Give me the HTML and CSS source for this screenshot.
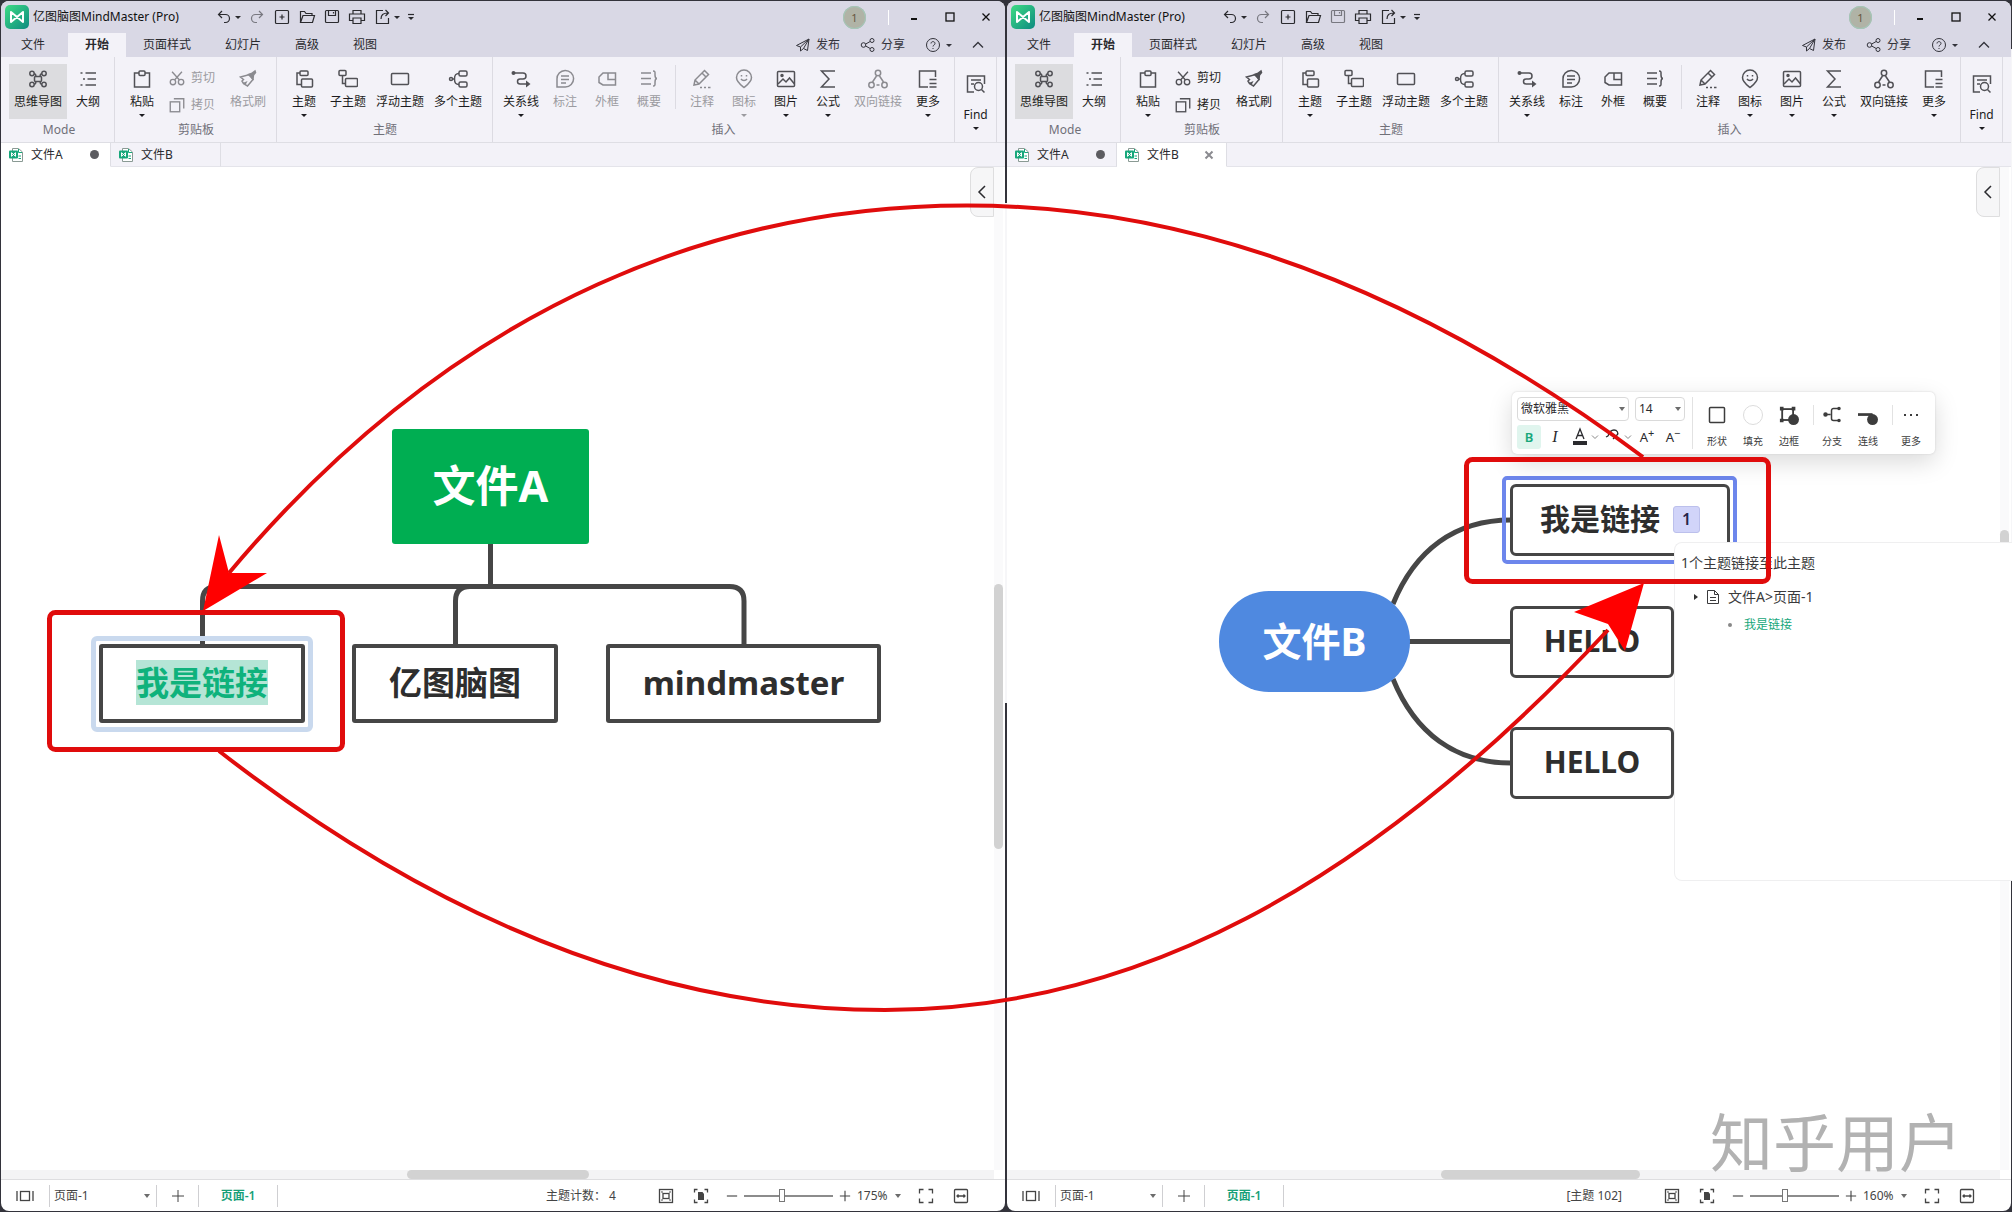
FILE: index.html
```html
<!DOCTYPE html>
<html lang="zh-CN">
<head>
<meta charset="utf-8">
<title>亿图脑图MindMaster (Pro)</title>
<link rel="stylesheet" href="styles.css">
</head>
<body>
<svg class="sprite" aria-hidden="true">
  <defs>
    <linearGradient id="brand" x1="0" y1="0" x2="1" y2="1"><stop offset="0" stop-color="#3fdc84"/><stop offset="1" stop-color="#0d8a80"/></linearGradient>
  </defs>
  <symbol id="logo" viewBox="0 0 24 24"><rect width="24" height="24" rx="5" fill="url(#brand)"/><path d="M6 7v10l12-10v10z" fill="none" stroke="#fff" stroke-width="2" stroke-linejoin="round"/></symbol>
  <symbol id="undo" viewBox="0 0 20 20"><path d="M8 4 4.500 7.500 8 11M5 7.500h6.500a3.800 3.800 0 0 1 0 8H10"/></symbol>
  <symbol id="redo" viewBox="0 0 20 20"><path d="m12 4 3.500 3.500L12 11M15 7.500H8.500a3.800 3.800 0 0 0 0 8H10"/></symbol>
  <symbol id="new" viewBox="0 0 20 20"><rect x="3.500" y="3.500" width="13" height="13" rx="1"/><path d="M10 7.500v5M7.500 10h5"/></symbol>
  <symbol id="open" viewBox="0 0 20 20"><path d="M3.500 15.500v-11h4l1.500 2h6v2M3.500 15.500l2.500-7h11.500l-2 7z"/></symbol>
  <symbol id="save" viewBox="0 0 20 20"><rect x="3.500" y="3.500" width="13" height="12" rx="1"/><path d="M6.500 3.500v5h7v-5M11.500 5v1.500"/></symbol>
  <symbol id="print" viewBox="0 0 20 20"><path d="M6 7V3.500h8V7M6 13.500H2.500V7h15v6.500H14M6 11h8v5.500H6z"/></symbol>
  <symbol id="export" viewBox="0 0 20 20"><path d="M10 3.500H3.500v13h12V11M8 12c0-4 2-6 7-6M12.500 3l3 3-3 3"/></symbol>
  <symbol id="more-v" viewBox="0 0 10 10"><path d="M2 2.500h6"/><path d="M2 5h6L5 8z" fill="currentColor" stroke="none"/></symbol>
  <symbol id="min" viewBox="0 0 12 12"><path d="M3 8h6" stroke-width="2"/></symbol>
  <symbol id="max" viewBox="0 0 12 12"><rect x="2" y="2" width="8" height="8"/></symbol>
  <symbol id="close" viewBox="0 0 12 12"><path d="m2.500 2.500 7 7M9.500 2.500l-7 7"/></symbol>
  <symbol id="plane" viewBox="0 0 16 16"><path d="M1.500 8.500 14 2l-1.500 11.500-4-2L14 2 5.500 10zM5.500 10v4l3-2.500"/></symbol>
  <symbol id="share" viewBox="0 0 16 16"><circle cx="3.500" cy="8" r="2.300"/><circle cx="12" cy="3.500" r="2"/><circle cx="12" cy="12.500" r="2"/><path d="m5.700 7 4.500-2.500M5.700 9l4.500 2.500"/></symbol>
  <symbol id="help" viewBox="0 0 16 16"><circle cx="8" cy="8" r="6.500"/><path d="M6 6.500c0-2.500 4-2.500 4 0 0 1.500-2 1.500-2 3M8 11v1"/></symbol>
  <symbol id="up" viewBox="0 0 12 12"><path d="m1 8.500 5-5 5 5"/></symbol>
  <symbol id="left" viewBox="0 0 12 16"><path d="M9 2 3 8l6 6"/></symbol>
  <symbol id="down" viewBox="0 0 8 8"><path d="m1 2.500 3 3 3-3"/></symbol>
  <symbol id="mind" viewBox="0 0 20 20"><rect x="6.500" y="7.500" width="7" height="5" rx="1"/><circle cx="4" cy="4.500" r="2.200"/><circle cx="16" cy="4.500" r="2.200"/><circle cx="4" cy="15.500" r="2.200"/><circle cx="16" cy="15.500" r="2.200"/><path d="M6.200 4.500C7.500 5 8 6 8 7.500M13.800 4.500C12.500 5 12 6 12 7.500M6.200 15.500c1.300-.5 1.800-1.500 1.800-3M13.800 15.500c-1.300-.5-1.800-1.500-1.800-3"/></symbol>
  <symbol id="outline" viewBox="0 0 20 20"><path d="M2.500 4h2M7.500 4H18M5 10h2M9.500 10H18M2.500 16h2M7.500 16H18"/></symbol>
  <symbol id="paste" viewBox="0 0 20 20"><path d="M7 4H2.500v14h15V4H13"/><rect x="7" y="2" width="6" height="4.500" rx="1"/></symbol>
  <symbol id="cut" viewBox="0 0 20 20"><circle cx="5.500" cy="14.500" r="3"/><circle cx="14.500" cy="14.500" r="3"/><path d="M4.500 3 12.500 12M15.500 3 7.500 12"/></symbol>
  <symbol id="copy" viewBox="0 0 20 20"><rect x="2.500" y="6.500" width="10.500" height="11"/><path d="M6.500 3h11v11"/></symbol>
  <symbol id="brush" viewBox="0 0 20 20"><path d="m2.500 8 9-2.500 3.500 5L9.500 17l-2.500-1.500 1-2-2.500 1L4 12l1.500-1.500z"/><path d="m10.500 5.500 3-1L17 2l.5 1.500L15.500 6l-.5 4z" fill="currentColor"/></symbol>
  <symbol id="topic" viewBox="0 0 20 20"><path d="M6 4H3v11.500h4.500"/><rect x="6" y="2" width="8" height="4.500" rx="1"/><rect x="7.500" y="10" width="11" height="8" rx="1"/></symbol>
  <symbol id="subtopic" viewBox="0 0 20 20"><rect x="1" y="1.500" width="7" height="5" rx="1"/><path d="M4.500 6.500v8H7"/><rect x="7.500" y="9.500" width="12" height="8" rx="1"/></symbol>
  <symbol id="float" viewBox="0 0 20 20"><rect x="1.500" y="4.500" width="17" height="11" rx="1"/></symbol>
  <symbol id="multi" viewBox="0 0 20 20"><rect x="11" y="2" width="8" height="5" rx="1.500"/><rect x="11" y="13" width="8" height="5" rx="1.500"/><circle cx="3" cy="10" r="1.500"/><path d="M4.500 10h2c0-4 1-5.500 4.500-5.500M6.500 10c0 4 1 5.500 4.500 5.500"/></symbol>
  <symbol id="relation" viewBox="0 0 20 20"><circle cx="2.500" cy="4" r="2" fill="currentColor" stroke="none"/><path d="M3 4h9a3 3 0 0 1 0 6H9a2.500 2.500 0 0 0 0 5h8"/><path d="M15 11.500v7l4.500-3.500z" fill="currentColor" stroke="none"/></symbol>
  <symbol id="callout" viewBox="0 0 20 20"><path d="M2 18v-8a8.300 8.300 0 1 1 8.300 8zM6 7h8M6 10.500h8M6 14h5"/></symbol>
  <symbol id="boundary" viewBox="0 0 20 20"><path d="M6 4h12.500v12H6L2 13.500V8zM11 4v6.500h7.500"/></symbol>
  <symbol id="summary" viewBox="0 0 20 20"><path d="M2 4h10M2 9.500h10M2 15h10M14 2c2.500 0 2 1.500 2 4 0 2 .5 3.500 2 3.500-1.500 0-2 1.500-2 3.500 0 2.500.5 4-2 4"/></symbol>
  <symbol id="note" viewBox="0 0 20 20"><path d="m2 16 1-5L12.500 1.500l4 4L7 15zM10 4l4 4M3 11l4 4"/><path d="M8 18.500h2M12 18.500h2M16 18.500h2.500"/></symbol>
  <symbol id="mark" viewBox="0 0 20 20"><path d="M10 18.500c-3-2.500-7.500-5.500-7.500-10a7.500 7.500 0 0 1 15 0c0 4.500-4.500 7.500-7.500 10z"/><path d="M7.500 6v1.500M12.500 6v1.500M7 10c1.500 2 4.500 2 6 0"/></symbol>
  <symbol id="picture" viewBox="0 0 20 20"><rect x="1.500" y="2.500" width="17" height="15" rx="1"/><path d="m2 15 5-5 3 3 3.500-4 5 6"/><circle cx="6" cy="6.500" r="1" fill="currentColor"/></symbol>
  <symbol id="formula" viewBox="0 0 20 20"><path d="M17 2H3.500l7.500 8-7.500 8H17"/></symbol>
  <symbol id="bilink" viewBox="0 0 20 20"><circle cx="10" cy="4" r="2.700"/><circle cx="3.500" cy="16" r="2.700"/><circle cx="16.500" cy="16" r="2.700"/><path d="m8.500 7-4 6M11.500 7l4 6M8.500 16h3"/></symbol>
  <symbol id="more" viewBox="0 0 20 20"><path d="M10 18H1.500V2h16v6M11.500 10.500h7M11.500 14.500h7M11.500 18h7"/></symbol>
  <symbol id="find" viewBox="0 0 20 20"><path d="M8 18H1.500V2h17v8M5 6h10M5 10h3"/><circle cx="12.500" cy="12.500" r="4"/><path d="m15.500 15.500 3 3"/></symbol>
  <symbol id="doc" viewBox="0 0 14 14"><path d="M3.500 13.500V.5h6L13.500 4v9.500z" fill="#fff" stroke="#8a9a94"/><path d="M9.500 8h2.500M9.500 10.500h2.500M9.500 1v3.500H13" fill="none" stroke="#17a77b"/><rect y="2.500" width="9" height="8" rx="1" fill="#17a77b"/><path d="M2.500 4.700v3.600l4-3.600v3.600z" fill="none" stroke="#fff"/></symbol>
  <symbol id="panes" viewBox="0 0 20 20"><path d="M2 5v10M18 5v10"/><rect x="5.500" y="5.500" width="9" height="9"/></symbol>
  <symbol id="plus" viewBox="0 0 14 14"><path d="M7 1v12M1 7h12"/></symbol>
  <symbol id="minus" viewBox="0 0 14 14"><path d="M1 7h12"/></symbol>
  <symbol id="fit" viewBox="0 0 20 20"><rect x="3.500" y="3.500" width="13" height="13"/><rect x="7" y="7.500" width="6" height="5"/><path d="m5.500 5.500 1 1M14.500 5.500l-1 1M5.500 14.500l1-1M14.500 14.500l-1-1"/></symbol>
  <symbol id="fitpage" viewBox="0 0 20 20"><path d="M3.500 6.500v-3h3M13.500 3.500h3v3M16.500 13.500v3h-3M6.500 16.500h-3v-3"/><path d="M7 6h4.500L13 8v6H7z" fill="currentColor" stroke="none"/></symbol>
  <symbol id="full" viewBox="0 0 20 20"><path d="M3.500 7.500v-4h4M12.500 3.500h4v4M16.500 12.500v4h-4M7.500 16.500h-4v-4"/></symbol>
  <symbol id="fitwidth" viewBox="0 0 20 20"><rect x="3.500" y="3.500" width="13" height="13" rx="1"/><path d="M6 10h8M7.500 8.500 6 10l1.500 1.500M12.500 8.500 14 10l-1.500 1.500"/></symbol>
  <symbol id="fontcolor" viewBox="0 0 18 20"><path d="m5 12 4-10 4 10M6.500 8.500h5"/><path d="M2 14h14v4H2z" fill="currentColor" stroke="none"/></symbol>
  <symbol id="marker" viewBox="0 0 18 20"><path d="M4 9c1-3 3-6 6-6s5 3 3 5l-4 4M4 9l-2 1"/></symbol>
  <symbol id="shape" viewBox="0 0 20 20"><rect x="2.500" y="2.500" width="15" height="15" rx="1"/></symbol>
  <symbol id="fill" viewBox="0 0 20 20"><circle cx="10" cy="10" r="9.500" stroke="#dcdcdc" stroke-width="1"/></symbol>
  <symbol id="border" viewBox="0 0 22 22"><rect x="3.500" y="4.500" width="12" height="12" stroke-width="2"/><path d="M1 2h4v4H1zM14 2h4v4h-4zM1 15h4v4H1z" fill="currentColor" stroke="none"/><circle cx="16" cy="16" r="6" fill="currentColor" stroke="none"/></symbol>
  <symbol id="branch" viewBox="0 0 20 20"><circle cx="3.500" cy="9.500" r="1.500" fill="currentColor"/><path d="M4 9.500h4.500M17 3.500h-5.500a2 2 0 0 0-2 2v8a2 2 0 0 0 2 2H17"/><circle cx="17" cy="3.500" r="1" fill="currentColor"/><circle cx="17" cy="15.500" r="1" fill="currentColor"/></symbol>
  <symbol id="line" viewBox="0 0 22 22"><path d="M0 10.500h16" stroke-width="3"/><circle cx="16" cy="16" r="6" fill="currentColor" stroke="none"/></symbol>
  <symbol id="dots" viewBox="0 0 20 20"><path d="M3 9h2v2H3zM9 9h2v2H9zM15 9h2v2h-2z" fill="currentColor" stroke="none"/></symbol>
  <symbol id="page" viewBox="0 0 14 16"><path d="M1.500 1.500h7l4 4v9h-11zM8.500 1.500v4h4M4 8.500h6M4 11.500h6"/></symbol>
</svg>

<main class="desktop">
  <section class="window">
    <header class="titlebar">
      <svg class="logo"><use href="#logo"/></svg>
      <h1>亿图脑图MindMaster (Pro)</h1>
      <div class="quick">
        <button class="wide" aria-label="撤销"><svg class="i20"><use href="#undo"/></svg><i class="caret"></i></button>
        <button class="off" aria-label="恢复"><svg class="i20"><use href="#redo"/></svg></button>
        <button aria-label="新建"><svg class="i20"><use href="#new"/></svg></button>
        <button aria-label="打开"><svg class="i20"><use href="#open"/></svg></button>
        <button aria-label="保存"><svg class="i20"><use href="#save"/></svg></button>
        <button aria-label="打印"><svg class="i20"><use href="#print"/></svg></button>
        <button class="wide" aria-label="导出"><svg class="i20"><use href="#export"/></svg><i class="caret"></i></button>
        <button class="narrow" aria-label="自定义"><svg class="i10"><use href="#more-v"/></svg></button>
      </div>
      <div class="controls">
        <span class="avatar">1</span><span class="bar"></span>
        <button aria-label="最小化"><svg class="i12"><use href="#min"/></svg></button>
        <button aria-label="最大化"><svg class="i12"><use href="#max"/></svg></button>
        <button aria-label="关闭"><svg class="i12"><use href="#close"/></svg></button>
      </div>
    </header>
    <nav class="menu">
      <button class="file">文件</button><button class="active">开始</button><button>页面样式</button><button>幻灯片</button><button>高级</button><button>视图</button>
      <div class="actions">
        <button><svg class="i16"><use href="#plane"/></svg>发布</button>
        <button><svg class="i16"><use href="#share"/></svg>分享</button>
        <button aria-label="帮助"><svg class="i16"><use href="#help"/></svg><i class="caret"></i></button>
        <button aria-label="收起"><svg class="i12"><use href="#up"/></svg></button>
      </div>
    </nav>
    <div class="ribbon">
      <div class="group mode"><div class="tools">
        <button class="tool on"><svg class="i20"><use href="#mind"/></svg>思维导图</button>
        <button class="tool"><svg class="i20"><use href="#outline"/></svg>大纲</button>
      </div><p>Mode</p></div>
      <div class="group"><div class="tools">
        <button class="tool"><svg class="i20"><use href="#paste"/></svg>粘贴<i class="caret"></i></button>
        <div class="clip">
          <button disabled><svg class="i18"><use href="#cut"/></svg>剪切</button>
          <button disabled><svg class="i18"><use href="#copy"/></svg>拷贝</button>
        </div>
        <button class="tool" disabled><svg class="i20"><use href="#brush"/></svg>格式刷</button>
      </div><p>剪贴板</p></div>
      <div class="group"><div class="tools">
        <button class="tool"><svg class="i20"><use href="#topic"/></svg>主题<i class="caret"></i></button>
        <button class="tool"><svg class="i20"><use href="#subtopic"/></svg>子主题</button>
        <button class="tool"><svg class="i20"><use href="#float"/></svg>浮动主题</button>
        <button class="tool"><svg class="i20"><use href="#multi"/></svg>多个主题</button>
      </div><p>主题</p></div>
      <div class="group insert"><div class="tools">
        <button class="tool"><svg class="i20"><use href="#relation"/></svg>关系线<i class="caret"></i></button>
        <button class="tool" disabled><svg class="i20"><use href="#callout"/></svg>标注</button>
        <button class="tool" disabled><svg class="i20"><use href="#boundary"/></svg>外框</button>
        <button class="tool" disabled><svg class="i20"><use href="#summary"/></svg>概要</button>
        <span class="split"></span>
        <button class="tool" disabled><svg class="i20"><use href="#note"/></svg>注释</button>
        <button class="tool" disabled><svg class="i20"><use href="#mark"/></svg>图标<i class="caret"></i></button>
        <button class="tool"><svg class="i20"><use href="#picture"/></svg>图片<i class="caret"></i></button>
        <button class="tool"><svg class="i20"><use href="#formula"/></svg>公式<i class="caret"></i></button>
        <button class="tool" disabled><svg class="i20"><use href="#bilink"/></svg>双向链接</button>
        <button class="tool"><svg class="i20"><use href="#more"/></svg>更多<i class="caret"></i></button>
      </div><p>插入</p></div>
      <div class="group find"><button class="tool"><svg class="i20"><use href="#find"/></svg>Find<i class="caret"></i></button></div>
    </div>
    <div class="docs">
      <button class="active"><svg class="i14"><use href="#doc"/></svg>文件A<i class="dot"></i></button>
      <button><svg class="i14"><use href="#doc"/></svg>文件B</button>
    </div>
    <div class="canvas">
      <svg class="links">
        <path d="M489.500 377v42.500M201.500 478v-44q0-14.500 14.500-14.500h512.500q14.500 0 14.500 14.500v44M454.500 478v-44q0-14.500 14.500-14.500"/>
      </svg>
      <div class="node root-a">文件A</div>
      <div class="select-a"></div>
      <div class="node square a1" id="link-a"><a href="#link-b">我是链接</a></div>
      <div class="node square a2">亿图脑图</div>
      <div class="node square a3">mindmaster</div>
      <button class="drawer" aria-label="展开面板"><svg class="i16"><use href="#left"/></svg></button>
      <div class="vtrack"><i class="vthumb"></i></div>
    </div>
    <div class="htrack"><i class="hthumb"></i></div>
    <footer class="status">
      <button class="view" aria-label="视图"><svg class="i20"><use href="#panes"/></svg></button>
      <label class="pick page"><select aria-label="页面"><option>页面-1</option></select></label>
      <button class="add" aria-label="新增页面"><svg class="i14"><use href="#plus"/></svg></button>
      <a class="sheet" href="#p1">页面-1</a>
      <div class="tail">
        <span class="count">主题计数： 4</span>
        <button aria-label="适合画布"><svg class="i20"><use href="#fit"/></svg></button>
        <button aria-label="适合页面"><svg class="i20"><use href="#fitpage"/></svg></button>
        <div class="zoom">
          <button aria-label="缩小"><svg class="i12"><use href="#minus"/></svg></button>
          <input type="range" min="0" max="100" value="42" aria-label="缩放">
          <button aria-label="放大"><svg class="i12"><use href="#plus"/></svg></button>
          <label class="pick percent"><select aria-label="缩放比例"><option>175%</option></select></label>
        </div>
        <button aria-label="全屏"><svg class="i20"><use href="#full"/></svg></button>
        <button aria-label="适合宽度"><svg class="i20"><use href="#fitwidth"/></svg></button>
      </div>
    </footer>
  </section>

  <section class="window second">
    <header class="titlebar">
      <svg class="logo"><use href="#logo"/></svg>
      <h1>亿图脑图MindMaster (Pro)</h1>
      <div class="quick">
        <button class="wide" aria-label="撤销"><svg class="i20"><use href="#undo"/></svg><i class="caret"></i></button>
        <button class="off" aria-label="恢复"><svg class="i20"><use href="#redo"/></svg></button>
        <button aria-label="新建"><svg class="i20"><use href="#new"/></svg></button>
        <button aria-label="打开"><svg class="i20"><use href="#open"/></svg></button>
        <button class="off" aria-label="保存"><svg class="i20"><use href="#save"/></svg></button>
        <button aria-label="打印"><svg class="i20"><use href="#print"/></svg></button>
        <button class="wide" aria-label="导出"><svg class="i20"><use href="#export"/></svg><i class="caret"></i></button>
        <button class="narrow" aria-label="自定义"><svg class="i10"><use href="#more-v"/></svg></button>
      </div>
      <div class="controls">
        <span class="avatar">1</span><span class="bar"></span>
        <button aria-label="最小化"><svg class="i12"><use href="#min"/></svg></button>
        <button aria-label="最大化"><svg class="i12"><use href="#max"/></svg></button>
        <button aria-label="关闭"><svg class="i12"><use href="#close"/></svg></button>
      </div>
    </header>
    <nav class="menu">
      <button class="file">文件</button><button class="active">开始</button><button>页面样式</button><button>幻灯片</button><button>高级</button><button>视图</button>
      <div class="actions">
        <button><svg class="i16"><use href="#plane"/></svg>发布</button>
        <button><svg class="i16"><use href="#share"/></svg>分享</button>
        <button aria-label="帮助"><svg class="i16"><use href="#help"/></svg><i class="caret"></i></button>
        <button aria-label="收起"><svg class="i12"><use href="#up"/></svg></button>
      </div>
    </nav>
    <div class="ribbon">
      <div class="group mode"><div class="tools">
        <button class="tool on"><svg class="i20"><use href="#mind"/></svg>思维导图</button>
        <button class="tool"><svg class="i20"><use href="#outline"/></svg>大纲</button>
      </div><p>Mode</p></div>
      <div class="group"><div class="tools">
        <button class="tool"><svg class="i20"><use href="#paste"/></svg>粘贴<i class="caret"></i></button>
        <div class="clip">
          <button><svg class="i18"><use href="#cut"/></svg>剪切</button>
          <button><svg class="i18"><use href="#copy"/></svg>拷贝</button>
        </div>
        <button class="tool"><svg class="i20"><use href="#brush"/></svg>格式刷</button>
      </div><p>剪贴板</p></div>
      <div class="group"><div class="tools">
        <button class="tool"><svg class="i20"><use href="#topic"/></svg>主题<i class="caret"></i></button>
        <button class="tool"><svg class="i20"><use href="#subtopic"/></svg>子主题</button>
        <button class="tool"><svg class="i20"><use href="#float"/></svg>浮动主题</button>
        <button class="tool"><svg class="i20"><use href="#multi"/></svg>多个主题</button>
      </div><p>主题</p></div>
      <div class="group insert"><div class="tools">
        <button class="tool"><svg class="i20"><use href="#relation"/></svg>关系线<i class="caret"></i></button>
        <button class="tool"><svg class="i20"><use href="#callout"/></svg>标注</button>
        <button class="tool"><svg class="i20"><use href="#boundary"/></svg>外框</button>
        <button class="tool"><svg class="i20"><use href="#summary"/></svg>概要</button>
        <span class="split"></span>
        <button class="tool"><svg class="i20"><use href="#note"/></svg>注释</button>
        <button class="tool"><svg class="i20"><use href="#mark"/></svg>图标<i class="caret"></i></button>
        <button class="tool"><svg class="i20"><use href="#picture"/></svg>图片<i class="caret"></i></button>
        <button class="tool"><svg class="i20"><use href="#formula"/></svg>公式<i class="caret"></i></button>
        <button class="tool"><svg class="i20"><use href="#bilink"/></svg>双向链接</button>
        <button class="tool"><svg class="i20"><use href="#more"/></svg>更多<i class="caret"></i></button>
      </div><p>插入</p></div>
      <div class="group find"><button class="tool"><svg class="i20"><use href="#find"/></svg>Find<i class="caret"></i></button></div>
    </div>
    <div class="docs">
      <button><svg class="i14"><use href="#doc"/></svg>文件A<i class="dot"></i></button>
      <button class="active"><svg class="i14"><use href="#doc"/></svg>文件B<svg class="i12 x"><use href="#close"/></svg></button>
    </div>
    <div class="canvas">
      <svg class="links">
        <path d="M402 474.500h102M386 437C408 383 448 353 504 353M386 512C408 566 448 596 504 596"/>
      </svg>
      <div class="node root-b">文件B</div>
      <div class="select-b"></div>
      <div class="node round b1" id="link-b">我是链接<span class="badge">1</span></div>
      <div class="node round b2">HELLO</div>
      <div class="node round b3">HELLO</div>
      <button class="drawer" aria-label="展开面板"><svg class="i16"><use href="#left"/></svg></button>
      <div class="vtrack"><i class="vthumb"></i></div>
      <div class="floatbar">
        <div class="format">
          <div class="row">
            <label class="pick face"><select aria-label="字体"><option>微软雅黑</option></select></label>
            <label class="pick size"><select aria-label="字号"><option>14</option></select></label>
          </div>
          <div class="row marks">
            <button class="bold">B</button><button class="italic">I</button>
            <button class="pair" aria-label="文字颜色"><svg class="ifmt"><use href="#fontcolor"/></svg><svg class="i8"><use href="#down"/></svg></button>
            <button class="pair" aria-label="高亮"><svg class="ifmt"><use href="#marker"/></svg><svg class="i8"><use href="#down"/></svg></button>
            <button>A<sup>+</sup></button><button>A<sup>−</sup></button>
          </div>
        </div>
        <span class="rule"></span>
        <button class="ft"><svg class="i20"><use href="#shape"/></svg>形状</button>
        <button class="ft"><svg class="i20"><use href="#fill"/></svg>填充</button>
        <button class="ft"><svg class="i20"><use href="#border"/></svg>边框</button>
        <span class="rule short"></span>
        <button class="ft"><svg class="i20"><use href="#branch"/></svg>分支</button>
        <button class="ft"><svg class="i20"><use href="#line"/></svg>连线</button>
        <span class="rule short"></span>
        <button class="ft"><svg class="i20"><use href="#dots"/></svg>更多</button>
      </div>
      <aside class="backlinks">
        <h2>1个主题链接至此主题</h2>
        <div class="source"><i class="tri"></i><svg class="ipage"><use href="#page"/></svg>文件A&gt;页面-1</div>
        <a href="#link-a"><i class="bullet"></i>我是链接</a>
      </aside>
      <div class="watermark">知乎用户</div>
    </div>
    <div class="htrack"><i class="hthumb"></i></div>
    <footer class="status">
      <button class="view" aria-label="视图"><svg class="i20"><use href="#panes"/></svg></button>
      <label class="pick page"><select aria-label="页面"><option>页面-1</option></select></label>
      <button class="add" aria-label="新增页面"><svg class="i14"><use href="#plus"/></svg></button>
      <a class="sheet" href="#p1">页面-1</a>
      <div class="tail">
        <span class="count">[主题 102]</span>
        <button aria-label="适合画布"><svg class="i20"><use href="#fit"/></svg></button>
        <button aria-label="适合页面"><svg class="i20"><use href="#fitpage"/></svg></button>
        <div class="zoom">
          <button aria-label="缩小"><svg class="i12"><use href="#minus"/></svg></button>
          <input type="range" min="0" max="100" value="38" aria-label="缩放">
          <button aria-label="放大"><svg class="i12"><use href="#plus"/></svg></button>
          <label class="pick percent"><select aria-label="缩放比例"><option>160%</option></select></label>
        </div>
        <button aria-label="全屏"><svg class="i20"><use href="#full"/></svg></button>
        <button aria-label="适合宽度"><svg class="i20"><use href="#fitwidth"/></svg></button>
      </div>
    </footer>
  </section>
</main>

<svg class="arrows" aria-hidden="true">
  <g fill="none" stroke="#e00c0c">
    <rect x="49.500" y="612.500" width="293" height="137" rx="6" stroke-width="5"/>
    <rect x="1466.500" y="459.500" width="302" height="122" rx="6" stroke-width="5"/>
    <path stroke-width="4" d="M229 573C464 293 732 205.500 967 205.500Q1305 205.500 1643 457"/>
    <path stroke-width="4" d="M219 751Q552 1010 885 1010C1130 1010 1363 892 1608 630"/>
  </g>
  <path fill="#f00" d="M203 611 219 535 229 573 267 573zM1644 583 1574 612 1608 624 1625 651z"/>
</svg>
</body>
</html>
```

FILE: styles.css
```css
* { box-sizing: border-box; }
html { background: #33333b; }
body {
  margin: 0;
  position: relative;
  color: #2a2a2e;
  font: 12px/16px "Noto Sans", "Noto Sans CJK SC", sans-serif;
}
button, select, input { font: inherit; color: inherit; margin: 0; padding: 0; border: 0; background: none; }
button { display: flex; align-items: center; justify-content: center; white-space: nowrap; }
a { color: inherit; text-decoration: none; }
h1, h2, p { margin: 0; font-size: 12px; font-weight: 400; }
svg { display: block; flex: none; fill: none; stroke: currentColor; stroke-width: 1.3; }
.sprite { position: absolute; width: 0; height: 0; }
.i8 { width: 8px; height: 8px; stroke-width: 1; color: #888; }
.i10 { width: 10px; height: 10px; }
.i12 { width: 12px; height: 12px; }
.i14 { width: 14px; height: 14px; stroke-width: 1; }
.i16 { width: 16px; height: 16px; stroke-width: 1; }
.i18 { width: 18px; height: 18px; stroke-width: 1.5; }
.i20 { width: 20px; height: 20px; }
.ifmt { width: 18px; height: 20px; }
.ipage { width: 14px; height: 16px; stroke-width: 1; }
.caret {
  flex: none;
  width: 0;
  border: 3px solid transparent;
  border-top: 3px solid currentColor;
  border-bottom: 0;
}

.desktop { display: grid; grid-template-columns: 1fr 1fr; gap: 2px; min-height: 100vh; padding: 1px; }
.window { position: relative; display: flex; flex-direction: column; min-width: 0; background: #fff; border-radius: 8px; }
.second::before, .second::after { content: ""; position: absolute; background: #f6f6f8; }
.second::before { left: -2px; width: 2px; top: 202px; height: 500px; }
.second::after { right: -1px; width: 1px; top: 48px; height: 832px; }

.titlebar { display: flex; align-items: center; height: 32px; padding-left: 4px; background: #d9d8e5; border-radius: 8px 8px 0 0; }
.titlebar h1 { width: 176px; padding-left: 4px; white-space: nowrap; color: #111; }
.logo { width: 24px; height: 24px; stroke: none; }
.quick { display: flex; align-items: center; gap: 5px; padding-left: 8px; }
.quick button { width: 20px; }
.quick .wide { width: 29px; gap: 1px; }
.quick .narrow { width: 10px; }
.quick svg { stroke-width: 1.2; }
.off { opacity: .55; }
.controls { display: flex; align-items: center; margin-left: auto; padding-right: 13px; }
.controls button { width: 12px; margin-left: 24px; color: #111; }
.controls .bar + button { margin-left: 19px; }
.avatar { width: 23px; height: 23px; line-height: 23px; border-radius: 50%; background: #b0b3a6; box-shadow: inset 0 0 0 1px #a4c6b8; text-align: center; font-size: 11px; color: #67553f; }
.bar { width: 1px; height: 15px; margin-left: 22px; background: #fff; }

.menu { display: flex; height: 24px; background: #d9d8e5; padding-left: 3px; }
.menu > button { padding: 0 17px; }
.menu .file { margin-right: 6px; }
.menu .active { background: #f3f2f8; font-weight: 700; }
.actions { display: flex; gap: 20px; margin-left: auto; padding-right: 21px; color: #33333b; }
.actions button { gap: 5px; }

.ribbon { display: flex; height: 86px; background: #f3f2f8; border-bottom: 1px solid #dedee4; color: #1c1c20; }
.group { padding: 7px 5px 0 6px; border-right: 1px solid #dcdbe2; }
.mode { padding-left: 8px; }
.insert { padding-left: 5px; }
.group p { line-height: 16px; margin-top: 3px; text-align: center; color: #707078; }
.tools { display: flex; }
.tool { flex-direction: column; justify-content: flex-start; gap: 4px; height: 55px; min-width: 42px; padding: 5px 5px 0; }
.tool svg { margin-bottom: 1px; }
.tool svg, .clip svg { color: #515156; stroke-width: 1.5; }
.on { background: #dcdcdf; }
button:disabled { color: #9b9ba0; }
button:disabled svg { color: #8b8b90; }
.clip { display: flex; flex-direction: column; gap: 9px; padding: 5px 10px 0 5px; }
.clip button { gap: 5px; height: 18px; }
.split { width: 1px; height: 44px; margin: 1px 5px 0; background: #dcdbe2; }
.find { padding: 5px 0 0; }
.find .tool { width: 41px; min-width: 0; height: 70px; padding-top: 12px; }
.find svg { margin-bottom: 9px; }

.docs { display: flex; height: 24px; background: #f3f2f8; }
.docs button { width: 110px; justify-content: flex-start; gap: 8px; padding: 0 11px 0 8px; border-right: 1px solid #dedee4; border-bottom: 1px solid #e4e4ea; }
.docs .active { background: #fff; border-bottom-color: #fff; }
.docs::after { content: ""; flex: 1; border-bottom: 1px solid #e4e4ea; }
.docs svg { stroke: none; }
.docs .x { margin-left: auto; stroke: #8b8b90; stroke-width: 2; }
.dot { width: 9px; height: 9px; margin-left: auto; border-radius: 50%; background: #5c5c60; }

.canvas { position: relative; flex: 1; min-height: 600px; }
.links { position: absolute; left: 0; top: 0; width: 100%; height: 100%; stroke: #464646; stroke-width: 5; }
.node { position: absolute; display: flex; align-items: center; justify-content: center; padding-bottom: 2px; font-weight: 700; white-space: nowrap; color: #2e2e2e; }
.root-a { left: 391px; top: 262px; width: 197px; height: 115px; border-radius: 3px; background: #00ae52; color: #fff; font-size: 43px; }
.square { top: 477px; width: 206px; height: 79px; border: 4px solid #464646; border-radius: 3px; background: #fff; font-size: 33px; }
.a1 { left: 98px; }
.a2 { left: 351px; }
.a3 { left: 605px; width: 275px; }
.a1 a { line-height: 45px; background: #b5e5d6; color: #0fb27c; }
.select-a { position: absolute; left: 90px; top: 469px; width: 222px; height: 96px; border: 5px solid #c9d9ee; border-radius: 6px; }
.root-b { left: 212px; top: 424px; width: 191px; height: 101px; border-radius: 50px; background: #4f89e0; color: #fff; font-size: 39px; }
.round { left: 503px; width: 164px; height: 72px; border: 3px solid #464646; border-radius: 6px; background: #fff; font-size: 30px; }
.b1 { top: 317px; width: 220px; gap: 13px; }
.b2 { top: 439px; }
.b3 { top: 560px; }
.select-b { position: absolute; left: 495px; top: 309px; width: 235px; height: 88px; border: 4px solid #6d86ec; border-radius: 5px; }
.badge { width: 27px; height: 27px; line-height: 25px; border: 1px solid #bcc0ec; border-radius: 3px; background: #d1d4f9; text-align: center; font-size: 16px; font-weight: 600; color: #26264a; }

.drawer { position: absolute; top: 0; right: 11px; width: 24px; height: 50px; border: 1px solid #dededf; border-radius: 8px 0 0 8px; background: #f6f6f7; }
.drawer svg { stroke-width: 1.5; }
.vtrack { position: absolute; top: 0; bottom: 0; right: 2px; width: 9px; background: #fafafb; }
.vthumb { position: absolute; top: 417px; left: 0; width: 9px; height: 265px; border-radius: 5px; background: #d2d2d2; }
.second .vthumb { top: 363px; }
.htrack { height: 9px; margin-right: 11px; background: #f4f4f5; }
.hthumb { display: block; width: 182px; height: 9px; margin-left: 406px; border-radius: 5px; background: #d2d2d2; }
.second .hthumb { width: 199px; margin-left: 434px; }

.status { display: flex; align-items: center; height: 32px; border-top: 1px solid #dedee0; color: #444; }
.status > * { height: 22px; border-right: 1px solid #cfcfd2; }
.view { width: 49px; }
.add { width: 42px; }
.page { width: 107px; }
.sheet { width: 79px; line-height: 22px; text-align: center; color: #17a077; font-weight: 600; }
.status .tail { display: flex; align-items: center; gap: 15px; margin-left: auto; padding-right: 34px; border: 0; }
.count { margin-right: 25px; white-space: nowrap; }
.zoom { display: flex; align-items: center; gap: 6px; }
.zoom input { appearance: none; width: 89px; height: 12px; background: linear-gradient(#8c8c8c, #8c8c8c) center / 100% 2px no-repeat; }
.zoom input::-webkit-slider-thumb { appearance: none; width: 6px; height: 13px; border: 1px solid #777; background: #fff; }
.pick { position: relative; display: flex; align-items: center; }
.pick select { appearance: none; width: 100%; height: 100%; }
.pick::after { content: ""; position: absolute; right: 6px; border: 3px solid transparent; border-top: 4px solid #6c6c6c; border-bottom: 0; pointer-events: none; }
.page select { padding-left: 4px; }
.percent { width: 44px; height: 16px; }
.percent::after { right: 0; }

.floatbar { position: absolute; left: 505px; top: 225px; display: flex; height: 62px; padding: 0 6px 0 5px; border-radius: 5px; background: #fff; box-shadow: 0 0 2px #ccc, 0 8px 24px #00000026; }
.format { width: 168px; padding-top: 5px; }
.row { display: flex; gap: 6px; }
.face, .size { height: 24px; border: 1px solid #dadada; border-radius: 4px; }
.face { width: 112px; }
.size { width: 50px; }
.face::after, .size::after { right: 3px; }
.face select, .size select { padding-left: 3px; }
.marks { gap: 2px; margin-top: 4px; }
.marks button { width: 24px; height: 24px; font-size: 13px; }
.marks .pair { width: 31px; gap: 2px; }
.marks .bold { border-radius: 3px; background: #e0f5ee; color: #17a77b; font-weight: 600; }
.marks .italic { font-family: "Liberation Serif", serif; font-style: italic; font-size: 16px; }
sup { font-size: 11px; line-height: 16px; align-self: flex-start; }
.rule { width: 1px; height: 52px; margin: 5px 6px 0 7px; background: #e2e2e2; }
.short { height: 20px; margin: 13px 0 0 6px; }
.ft { flex-direction: column; justify-content: flex-start; width: 36px; padding-top: 13px; gap: 8px; font-size: 10px; color: #3c3c3c; }
.ft svg { stroke-width: 1.5; overflow: visible; }

.backlinks { position: absolute; left: 667px; right: -1px; top: 375px; height: 339px; padding: 11px 6px; border: 1px solid #efeff0; border-right: 0; border-radius: 8px 0 0 8px; background: #fff; font-size: 14px; color: #3a3a3c; z-index: 1; }
.backlinks h2 { font-size: 14px; line-height: 18px; }
.source { display: flex; align-items: center; gap: 8px; padding: 16px 0 0 13px; line-height: 18px; }
.tri { border: 3px solid transparent; border-left: 4px solid #333; border-right: 0; }
.backlinks a { display: flex; align-items: center; gap: 12px; padding: 11px 0 0 47px; font-size: 12px; color: #17a77b; }
.bullet { width: 4px; height: 4px; border-radius: 50%; background: #888; }
.watermark { position: absolute; right: 49px; bottom: 0; font-size: 63px; line-height: 63px; font-weight: 400; font-family: "Noto Sans CJK SC", sans-serif; color: #b2b2b2; white-space: nowrap; }

.arrows { position: absolute; left: 0; top: 0; width: 100%; height: 100%; stroke: none; pointer-events: none; z-index: 2; }
```
